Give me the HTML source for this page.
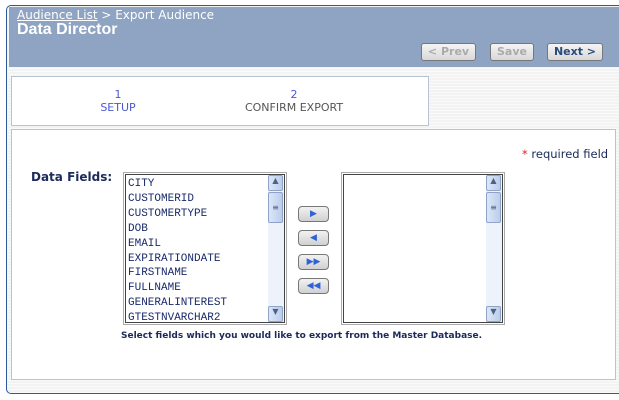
<!DOCTYPE html>
<html><head><style>
body{margin:0;width:619px;height:400px;background:#fff;font-family:Verdana,"DejaVu Sans",sans-serif;position:relative;overflow:hidden}
.abs{position:absolute}
.outer{left:6px;top:5px;width:620px;height:387px;border:1px solid #2a5a9a;border-right:none;border-radius:5px 0 0 5px;background:repeating-linear-gradient(#f3f3f3 0 2px,#fafafa 2px 3px)}
.hdr{left:9px;top:7px;width:610px;height:60px;background:#8fa3c3}
.btn{top:43px;border:1px solid #777;border-radius:3px;background:linear-gradient(#f4f4f4,#d8d8d8);font:bold 11px Verdana,"DejaVu Sans",sans-serif;text-align:center;line-height:16px;box-sizing:border-box;height:18px}
.lb{top:172px;width:164px;height:153px;border:1px solid #aaa;box-sizing:border-box;background:#fff}
.lb .in{position:absolute;inset:1px;border:1px solid #444}
.sb{position:absolute;right:2px;top:2px;bottom:2px;width:16px;background:#eef3fb}
.sb div{position:absolute;left:0;width:15px;border:1px solid #8ea3c8;border-radius:2px;background:linear-gradient(90deg,#dbe6f8,#bccdeb);box-sizing:border-box;font-size:8px;text-align:center;color:#4d6185}
.items{position:absolute;left:4px;top:4px;font:11px "Liberation Mono","DejaVu Sans Mono",monospace;color:#1a2a6a;line-height:14.9px}
.ab{left:298px;width:31px;height:16px;border:1px solid #777;border-radius:4px;background:linear-gradient(#f2f2f2,#d0d0d0);box-sizing:border-box;color:#2f62d8;font-size:9px;text-align:center;line-height:14px}
</style></head><body>
<div class="abs outer"></div>
<div class="abs hdr"></div>
<div class="abs" style="left:17px;top:8px;font-size:12px;color:#fff"><span style="text-decoration:underline">Audience List</span> &gt; Export Audience</div>
<div class="abs" style="left:17px;top:21px;font:bold 16px 'Liberation Sans',Arial,sans-serif;color:#fff">Data Director</div>
<div class="abs btn" style="left:421px;width:55px;color:#aaa">&lt; Prev</div>
<div class="abs btn" style="left:490px;width:44px;color:#aaa">Save</div>
<div class="abs btn" style="left:547px;width:56px;color:#2a4a7a">Next &gt;</div>
<div class="abs" style="left:11px;top:76px;width:418px;height:50px;background:#fff;border:1px solid #b8c4d4;box-sizing:border-box"></div>
<div class="abs" style="left:96px;top:88px;width:44px;text-align:center;font-size:11px;color:#4a5acc;line-height:13px">1<br>SETUP</div>
<div class="abs" style="left:230px;top:88px;width:128px;text-align:center;font-size:11px;color:#555;line-height:13px"><span style="color:#4a5acc">2</span><br>CONFIRM EXPORT</div>
<div class="abs" style="left:11px;top:129px;width:605px;height:251px;background:#fff;border:1px solid #b8c4d4;box-sizing:border-box"></div>
<div class="abs" style="left:522px;top:147px;font-size:11.5px;color:#1a2a5a"><span style="color:#e02020">*</span> required field</div>
<div class="abs" style="left:31px;top:170px;font-size:12px;font-weight:bold;color:#1a2a5a">Data Fields:</div>
<div class="abs lb" style="left:123px"><div class="in"></div>
<div class="items">CITY<br>CUSTOMERID<br>CUSTOMERTYPE<br>DOB<br>EMAIL<br>EXPIRATIONDATE<br>FIRSTNAME<br>FULLNAME<br>GENERALINTEREST<br>GTESTNVARCHAR2</div>
<div class="sb"><div style="top:0;height:16px">▲</div><div style="top:17px;height:31px;line-height:29px">≡</div><div style="bottom:0;height:16px">▼</div></div></div>
<div class="abs lb" style="left:341px"><div class="in"></div>
<div class="sb"><div style="top:0;height:16px">▲</div><div style="top:17px;height:31px;line-height:29px">≡</div><div style="bottom:0;height:16px">▼</div></div></div>
<div class="abs ab" style="top:206px">▶</div>
<div class="abs ab" style="top:230px">◀</div>
<div class="abs ab" style="top:254px">▶▶</div>
<div class="abs ab" style="top:278px">◀◀</div>
<div class="abs" style="left:121px;top:331px;font-size:9px;font-weight:bold;color:#1a2a5a">Select fields which you would like to export from the Master Database.</div>
</body></html>
